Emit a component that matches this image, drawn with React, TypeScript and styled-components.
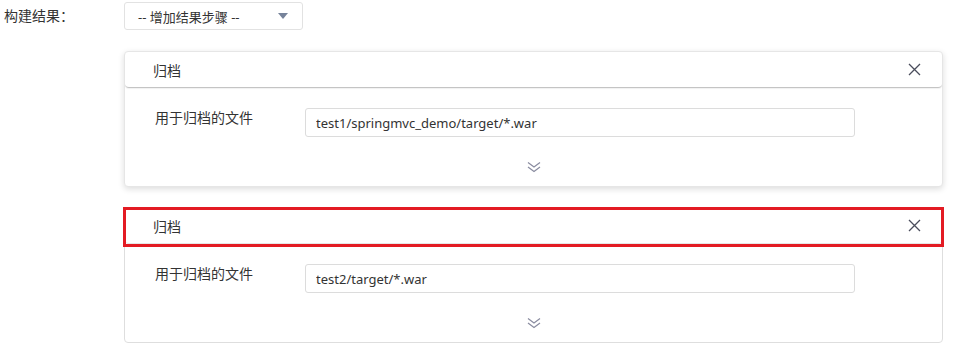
import React from 'react';
import styled, { createGlobalStyle } from 'styled-components';

const GlobalStyle = createGlobalStyle`
  body {
    margin: 0;
    background: #fff;
    font-family: "Noto Sans", "Noto Sans CJK SC", sans-serif;
    color: #333;
  }
`;

type Step = { title: string; value: string; highlighted?: boolean };

const steps: Step[] = [
  { title: '归档', value: 'test1/springmvc_demo/target/*.war' },
  { title: '归档', value: 'test2/target/*.war', highlighted: true },
];

const CloseIcon = () => (
  <svg width="13" height="13" viewBox="0 0 13 13">
    <path d="M1 1 L12 12 M12 1 L1 12" stroke="#4a4d5c" strokeWidth="1.3" fill="none" />
  </svg>
);

const ExpandIcon = () => (
  <svg width="14" height="12" viewBox="0 0 14 12">
    <path d="M1 1.5 L7 6 L13 1.5 M1 6 L7 10.5 L13 6" stroke="#8a8ca0" strokeWidth="1.2" fill="none" />
  </svg>
);

const App = () => {
  return (
    <>
      <GlobalStyle />
      <Page>
        <Label>构建结果：</Label>
        <Content>
          <Select>
            <span>-- 增加结果步骤 --</span>
            <Caret />
          </Select>
          {steps.map((step, i) => (
            <Card key={i} $flat={step.highlighted}>
              <CardHeader $highlighted={step.highlighted}>
                <span>{step.title}</span>
                <CloseButton>
                  <CloseIcon />
                </CloseButton>
              </CardHeader>
              <CardBody>
                <FieldRow>
                  <FieldLabel>用于归档的文件</FieldLabel>
                  <Input value={step.value} readOnly />
                </FieldRow>
                <More>
                  <ExpandIcon />
                </More>
              </CardBody>
            </Card>
          ))}
        </Content>
      </Page>
    </>
  );
};

export default App;

const Page = styled.div`
  display: flex;
  padding-top: 2px;
`;

const Label = styled.div`
  width: 124px;
  padding-left: 4px;
  box-sizing: border-box;
  font-size: 14px;
  line-height: 28px;
  color: #333;
`;

const Content = styled.div`
  width: 819px;
  display: flex;
  flex-direction: column;
  gap: 20px;
`;

const Select = styled.div`
  width: 179px;
  height: 28px;
  box-sizing: border-box;
  border: 1px solid #e2e2e2;
  border-radius: 3px;
  display: flex;
  align-items: center;
  justify-content: space-between;
  padding: 0 14px 0 13px;
  font-size: 13px;
  color: #333;
  margin-bottom: 1px;
`;

const Caret = styled.span`
  width: 0;
  height: 0;
  border-left: 5px solid transparent;
  border-right: 5px solid transparent;
  border-top: 6px solid #76839a;
`;

const Card = styled.div<{ $flat?: boolean }>`
  height: 136px;
  box-sizing: border-box;
  border: 1px solid ${(p) => (p.$flat ? '#dedede' : '#e6e6e6')};
  border-radius: 4px;
  background: #fff;
  box-shadow: ${(p) => (p.$flat ? 'none' : '0 2px 6px rgba(0, 0, 0, 0.14)')};
  display: flex;
  flex-direction: column;
`;

const CardHeader = styled.div<{ $highlighted?: boolean }>`
  position: relative;
  height: 35px;
  flex-shrink: 0;
  display: flex;
  align-items: center;
  justify-content: space-between;
  padding: 0 21px 0 28px;
  font-size: 14px;
  color: #333;
  border-bottom: 1px solid ${(p) => (p.$highlighted ? '#e6e6e6' : '#c4c4c4')};
  border-radius: 4px;
  box-shadow: ${(p) => (p.$highlighted ? 'none' : '0 1px 1px rgba(0, 0, 0, 0.06)')};

  ${(p) =>
    p.$highlighted &&
    `
    &::after {
      content: '';
      position: absolute;
      top: -1px;
      left: -2px;
      right: -2px;
      bottom: -4px;
      border: 3px solid #e31b23;
      pointer-events: none;
    }
  `}
`;

const CloseButton = styled.span`
  display: flex;
  align-items: center;
`;

const CardBody = styled.div`
  flex: 1;
  display: flex;
  flex-direction: column;
  padding: 20px 0 0;
`;

const FieldRow = styled.div`
  display: flex;
  align-items: flex-start;
  padding-left: 30px;
`;

const FieldLabel = styled.div`
  width: 150px;
  font-size: 14px;
  line-height: 20px;
  color: #333;
`;

const Input = styled.input`
  width: 550px;
  height: 29px;
  box-sizing: border-box;
  border: 1px solid #dcdcdc;
  border-radius: 3px;
  padding: 0 10px;
  font-family: inherit;
  font-size: 13px;
  color: #333;
  outline: none;
`;

const More = styled.div`
  flex: 1;
  display: flex;
  align-items: flex-end;
  justify-content: center;
  padding-bottom: 13px;
`;
